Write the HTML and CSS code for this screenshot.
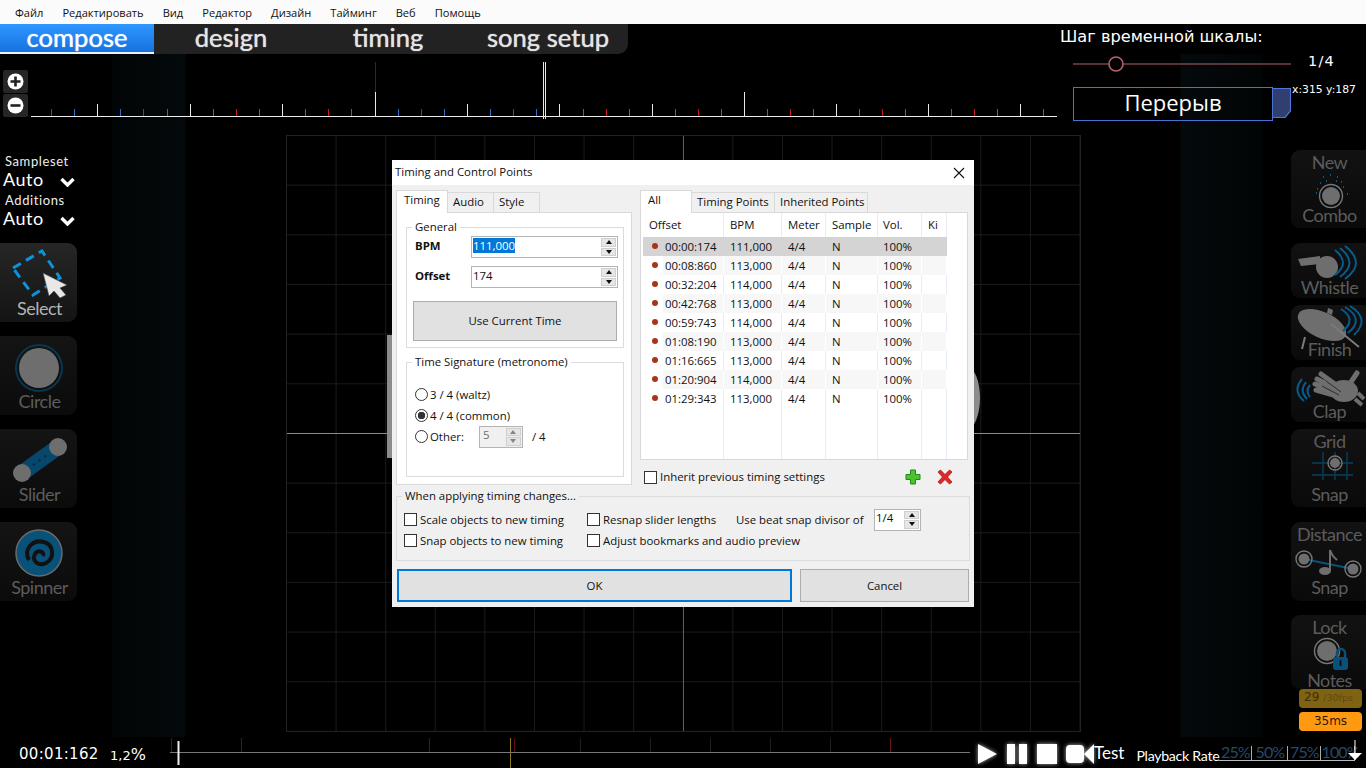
FILE: index.html
```html
<!DOCTYPE html>
<html lang="ru">
<head>
<meta charset="utf-8">
<title>Timing and Control Points</title>
<link rel="stylesheet" href="styles.css">
</head>
<body>
<nav class="menu">
  <span>Файл</span><span>Редактировать</span><span>Вид</span><span>Редактор</span><span>Дизайн</span><span>Тайминг</span><span>Веб</span><span>Помощь</span>
</nav>

<section class="top">
  <div class="top-left">
    <div class="modes">
      <span class="mode mode-on">compose</span><span class="mode m2">design</span><span class="mode m3">timing</span><span class="mode m4">song setup</span>
    </div>
    <div class="ruler">
      <div class="zooms">
        <svg class="zoom-btn" viewBox="0 0 25 23"><rect width="25" height="23" rx="2" fill="#262626"/><circle cx="12.5" cy="11.5" r="8" fill="#fff"/><path d="M7.500 11.500H17.500M12.500 6.500V16.500" stroke="#222" stroke-width="2.600"/></svg>
        <svg class="zoom-btn" viewBox="0 0 25 23"><rect width="25" height="23" rx="2" fill="#262626"/><circle cx="12.500" cy="11.500" r="8" fill="#fff"/><path d="M7.500 11.500H17.500" stroke="#222" stroke-width="2.600"/></svg>
      </div>
      <svg class="ticks" viewBox="31 54 1026 66">
        <path d="M375.500 62V92" stroke="#6a0f14"/>
        <path d="M31 116.500H1057" stroke="#eee"/>
        <path d="M51.500 109V116M143.500 109V116M236.500 109V116M328.500 109V116M421.500 109V116M513.500 109V116M606.500 109V116M698.500 109V116M790.500 109V116M882.500 109V116M974.500 109V116" stroke="#d3141c"/>
        <path d="M74.500 109V116M120.500 109V116M167.500 109V116M213.500 109V116M259.500 109V116M305.500 109V116M351.500 109V116M398.500 109V116M444.500 109V116M490.500 109V116M536.500 109V116M583.500 109V116M629.500 109V116M675.500 109V116M721.500 109V116M767.500 109V116M813.500 109V116M859.500 109V116M905.500 109V116M951.500 109V116M997.500 109V116M1043.500 109V116" stroke="#2f69d6"/>
        <path d="M97.500 104V116M190.500 104V116M282.500 104V116M467.500 104V116M559.500 104V116M652.500 104V116M836.500 104V116M928.500 104V116M1020.500 104V116M375.500 92V116M744.500 92V116M543.500 62V119M545.500 62V119" stroke="#e8e8e8"/>
      </svg>
    </div>
  </div>
  <div class="top-right">
    <div class="snap-title">Шаг временной шкалы:</div>
    <div class="snap-row">
      <svg class="snap-slider" viewBox="0 0 218 16"><path d="M0 8H218" stroke="#b8606f"/><circle cx="43" cy="8" r="7" fill="#000" stroke="#b8606f" stroke-width="1.600"/></svg>
      <span class="snap-val">1/4</span>
    </div>
    <div class="break-row">
      <div class="break-btn">Перерыв</div>
      <svg class="break-tab" viewBox="0 0 18 30"><path d="M0 .5H17.500V23L12 29.500H0" fill="#2e3f70" stroke="#5578d8" stroke-width="1.200"/></svg>
      <span class="coords">x:315 y:187</span>
    </div>
  </div>
</section>

<section class="main">
  <aside class="left">
    <div class="sample">
      <div class="s-label">Sampleset</div>
      <div class="s-value"><span>Auto</span><svg class="chev" viewBox="0 0 16 10"><path d="M2 2L8 8L14 2" fill="none" stroke="#fff" stroke-width="3.400"/></svg></div>
      <div class="s-label s-second">Additions</div>
      <div class="s-value"><span>Auto</span><svg class="chev" viewBox="0 0 16 10"><path d="M2 2L8 8L14 2" fill="none" stroke="#fff" stroke-width="3.400"/></svg></div>
    </div>
    <div class="card card-on">
      <svg class="icon" viewBox="0 0 77 55"><path d="M13 25L42 8L60 35L33 52Z" fill="none" stroke="#0d93dc" stroke-width="3" stroke-dasharray="9 6"/><path d="M43 35L67 47L60 50L66 57L60 60L54 53L49 58Z" transform="translate(0 -5)" fill="#e8e8e8" stroke="#444" stroke-width=".6"/></svg>
      <span class="lbl">Select</span>
    </div>
    <div class="card">
      <svg class="icon" viewBox="0 0 77 55"><circle cx="39" cy="32" r="23" fill="none" stroke="#07364f" stroke-width="2"/><circle cx="39" cy="32" r="20" fill="#6e6e6e"/></svg>
      <span class="lbl">Circle</span>
    </div>
    <div class="card">
      <svg class="icon" viewBox="0 0 77 55"><path d="M22 44L58 18" stroke="#07476b" stroke-width="16"/><path d="M33 36L47 26" stroke="#04283d" stroke-width="2" stroke-dasharray="2 5"/><circle cx="22" cy="44" r="9" fill="#6e6e6e"/><circle cx="58" cy="18" r="9" fill="#6e6e6e"/></svg>
      <span class="lbl">Slider</span>
    </div>
    <div class="card">
      <svg class="icon" viewBox="0 0 77 55"><circle cx="39" cy="31" r="23" fill="#08527a" stroke="#6a6a6a" stroke-width="1.500"/><path d="M29 38C23 27 33 17 44 20C54 23 55 36 46 41C38 45 31 38 35 32C38 27 45 30 43 34" fill="none" stroke="#111" stroke-width="4"/></svg>
      <span class="lbl">Spinner</span>
    </div>
  </aside>

  <aside class="right">
    <div class="rcard h78">
      <span class="lbl">New</span>
      <svg class="ricon i32" viewBox="0 0 75 32"><circle cx="40" cy="23" r="9" fill="#6e6e6e"/><circle cx="40" cy="23" r="11.500" fill="none" stroke="#777" stroke-width="1.400"/><path d="M26 16h1M32 4h1M39 2h1M46 4h1M52 14h1M35 8h1M45 8h1M29 10h1M50 9h1M25 20h1M56 21h1" stroke="#0a5a8a" stroke-width="2"/></svg>
      <span class="lbl">Combo</span>
    </div>
    <div class="rcard h55 gap15">
      <svg class="ricon i32" viewBox="0 0 75 32"><path d="M7 14L29 11V19L10 21Z" fill="#6e6e6e"/><circle cx="36" cy="22" r="11" fill="#6e6e6e"/><path d="M44 5Q60 18 44 30M49 3Q68 18 49 32M54 1Q76 18 54 34" fill="none" stroke="#0a5a8a" stroke-width="2"/></svg>
      <span class="lbl">Whistle</span>
    </div>
    <div class="rcard h55">
      <svg class="ricon i32" viewBox="0 0 75 32"><ellipse cx="31" cy="18" rx="26" ry="13" transform="rotate(25 31 18)" fill="#6e6e6e"/><path d="M37 1L42 3L41 8L36 6Z" fill="#6e6e6e"/><path d="M40 17L68 40M14 30L11 42" stroke="#7a7a7a" stroke-width="2"/><path d="M50 2Q66 12 52 24M54 0Q74 12 57 26M59 -1Q80 12 63 28" fill="none" stroke="#0a5a8a" stroke-width="2"/></svg>
      <span class="lbl">Finish</span>
    </div>
    <div class="rcard h55">
      <svg class="ricon i32" viewBox="0 0 75 32"><ellipse cx="53" cy="22" rx="14" ry="11" fill="#6e6e6e"/><path d="M48 18L30 5M47 21L26 10M46 24L24 15M46 27L25 21M58 16L66 4" fill="none" stroke="#6e6e6e" stroke-width="5" stroke-linecap="round"/><path d="M64 30L71 36M67 24L73 30" stroke="#6e6e6e" stroke-width="4"/><path d="M35 12L50 23M31 17L48 26" stroke="#2c2c2c"/><path d="M11 10Q1 22 13 32M15 13Q8 22 16 30M19 16Q14 22 19 28" fill="none" stroke="#0a5a8a" stroke-width="2"/></svg>
      <span class="lbl">Clap</span>
    </div>
    <div class="rcard h78">
      <span class="lbl">Grid</span>
      <svg class="ricon i32" viewBox="0 0 75 32"><path d="M32 0V28M44 0V28M56 0V28M21 11H62M21 23H62" stroke="#07405e" stroke-width="1.400"/><circle cx="44" cy="11" r="5" fill="#6e6e6e"/><circle cx="44" cy="11" r="7" fill="none" stroke="#777" stroke-width="1.400"/></svg>
      <span class="lbl">Snap</span>
    </div>
    <div class="rcard h79 gap15">
      <span class="lbl">Distance</span>
      <svg class="ricon i32" viewBox="0 0 75 32"><path d="M13 14L62 24" stroke="#08527a" stroke-width="2"/><circle cx="13" cy="14" r="5.500" fill="#6e6e6e"/><circle cx="13" cy="14" r="8" fill="none" stroke="#777" stroke-width="1.400"/><circle cx="62" cy="24" r="5.500" fill="#6e6e6e"/><circle cx="62" cy="24" r="8" fill="none" stroke="#777" stroke-width="1.400"/><ellipse cx="34" cy="26" rx="6" ry="4" fill="#6e6e6e"/><path d="M39 26V5Q41 11 46 15" fill="none" stroke="#6e6e6e" stroke-width="2"/></svg>
      <span class="lbl">Snap</span>
    </div>
    <div class="rcard h74 gap14">
      <span class="lbl">Lock</span>
      <svg class="ricon i32" viewBox="0 0 75 32"><circle cx="36" cy="13" r="10" fill="#6e6e6e"/><circle cx="36" cy="13" r="12.500" fill="none" stroke="#777" stroke-width="1.400"/><path d="M46 20V15A4 4 0 0 1 54 15V20" fill="none" stroke="#08527a" stroke-width="2.400"/><rect x="42" y="19" width="15" height="13" rx="3" fill="#08527a"/><path d="M49.500 22V28" stroke="#111" stroke-width="2"/></svg>
      <span class="lbl">Notes</span>
    </div>
    <div class="fps"><span>29</span><small>/30fps</small></div>
    <div class="ms">35ms</div>
  </aside>
</section>

<footer class="bottom">
  <div class="clock">00:01:162</div>
  <div class="pct">1,2<span>%</span></div>
  <svg class="seek" viewBox="170 734 800 34">
    <path d="M171.500 738V752M241.500 738V752M429.500 738V752M514.500 738V752" stroke="#5c1015"/>
    <path d="M580.500 738V752M650.500 738V752M710.500 738V752M770.500 738V752M830.500 738V752" stroke="#1e1e1e"/>
    <path d="M890.500 738V752" stroke="#6a1418"/>
    <path d="M510.500 738V768" stroke="#8d7a12"/>
    <path d="M170 752.500H970" stroke="#777"/>
    <path d="M178.500 741V765" stroke="#eee" stroke-width="2"/>
  </svg>
  <div class="player">
    <svg class="pbtn" viewBox="0 0 20 20"><path d="M1 0L20 10L1 20Z"/></svg>
    <svg class="pbtn" viewBox="0 0 20 20"><path d="M0 0H8V20H0ZM12 0H20V20H12Z"/></svg>
    <svg class="pbtn" viewBox="0 0 20 20"><path d="M0 0H20V20H0Z"/></svg>
    <svg class="pbtn cam" viewBox="0 0 28 20"><rect y="1" width="18" height="18" rx="4"/><path d="M28 0V20L18 10Z"/></svg>
  </div>
  <span class="test">Test</span>
  <span class="rate-label">Playback Rate</span>
  <div class="rates"><span>25%</span><span>50%</span><span>75%</span><span>100%</span>
    <svg class="rate-arrow" viewBox="0 0 14 28"><path d="M7 0V20" stroke="#fff"/><path d="M0 13H14L7 20Z" fill="#fff"/></svg>
  </div>
</footer>

<div class="field">
  <span class="ghost-l"></span><span class="ghost-r"></span>
</div>

<div class="dialog">
  <div class="d-title"><span>Timing and Control Points</span>
    <svg class="d-close" viewBox="0 0 12 12"><path d="M1 1L11 11M11 1L1 11" stroke="#111" stroke-width="1.100"/></svg>
  </div>
  <div class="panes">
    <div class="pane-l">
      <div class="tabs">
        <span class="tab tab-on t51">Timing</span><span class="tab t46">Audio</span><span class="tab t46">Style</span>
      </div>
      <div class="panel panel-l">
        <fieldset class="fs fs-gen">
          <legend>General</legend>
          <div class="num-row"><b>BPM</b>
            <div class="num"><span class="sel">111,000</span><i class="spin"><u class="up"></u><u class="dn"></u></i></div>
          </div>
          <div class="num-row"><b>Offset</b>
            <div class="num"><span>174</span><i class="spin"><u class="up"></u><u class="dn"></u></i></div>
          </div>
          <button class="btn use">Use Current Time</button>
        </fieldset>
        <fieldset class="fs fs-sig">
          <legend>Time Signature (metronome)</legend>
          <label class="r"><input type="radio" name="sig">3 / 4 (waltz)</label>
          <label class="r"><input type="radio" name="sig" checked>4 / 4 (common)</label>
          <label class="r"><input type="radio" name="sig">Other:
            <span class="num num-off"><span>5</span><i class="spin"><u class="up"></u><u class="dn"></u></i></span>
            <span class="per">/ 4</span></label>
        </fieldset>
      </div>
    </div>
    <div class="pane-r">
      <div class="tabs">
        <span class="tab tab-on t51">All</span><span class="tab t82">Timing Points</span><span class="tab t92">Inherited Points</span>
      </div>
      <div class="panel panel-r">
        <table class="points">
          <colgroup><col class="c1"><col class="c2"><col class="c3"><col class="c4"><col class="c5"><col class="c6"></colgroup>
          <thead><tr><th>Offset</th><th>BPM</th><th>Meter</th><th>Sample</th><th>Vol.</th><th>Ki</th></tr></thead>
          <tbody>
            <tr class="cur"><td class="t">00:00:174</td><td>111,000</td><td>4/4</td><td>N</td><td>100%</td><td></td></tr>
            <tr class="alt"><td class="t">00:08:860</td><td>113,000</td><td>4/4</td><td>N</td><td>100%</td><td></td></tr>
            <tr><td class="t">00:32:204</td><td>114,000</td><td>4/4</td><td>N</td><td>100%</td><td></td></tr>
            <tr class="alt"><td class="t">00:42:768</td><td>113,000</td><td>4/4</td><td>N</td><td>100%</td><td></td></tr>
            <tr><td class="t">00:59:743</td><td>114,000</td><td>4/4</td><td>N</td><td>100%</td><td></td></tr>
            <tr class="alt"><td class="t">01:08:190</td><td>113,000</td><td>4/4</td><td>N</td><td>100%</td><td></td></tr>
            <tr><td class="t">01:16:665</td><td>113,000</td><td>4/4</td><td>N</td><td>100%</td><td></td></tr>
            <tr class="alt"><td class="t">01:20:904</td><td>114,000</td><td>4/4</td><td>N</td><td>100%</td><td></td></tr>
            <tr><td class="t">01:29:343</td><td>113,000</td><td>4/4</td><td>N</td><td>100%</td><td></td></tr>
            <tr class="fill"><td></td><td></td><td></td><td></td><td></td><td></td></tr>
          </tbody>
        </table>
      </div>
      <div class="inherit">
        <label class="c"><input type="checkbox">Inherit previous timing settings</label>
        <svg class="act act-add" viewBox="0 0 16 16"><path d="M5.500 1H10.500V5.500H15V10.500H10.500V15H5.500V10.500H1V5.500H5.500Z" fill="#4cc32e" stroke="#1f8a14"/></svg>
        <svg class="act" viewBox="0 0 16 16"><path d="M1 3L3.500 1L8 5.500L12.500 1L15 3L10.500 8L15 13L12.500 15L8 10.500L3.500 15L1 13L5.500 8Z" fill="#e0262a" stroke="#a81a1a" stroke-width=".8"/></svg>
      </div>
    </div>
  </div>
  <fieldset class="fs fs-apply">
    <legend>When applying timing changes...</legend>
    <div class="apply-grid">
      <label class="c"><input type="checkbox">Scale objects to new timing</label>
      <label class="c"><input type="checkbox">Resnap slider lengths</label>
      <span class="divisor">Use beat snap divisor of</span>
      <div class="num num-div"><span>1/4</span><i class="spin"><u class="up"></u><u class="dn"></u></i></div>
      <label class="c"><input type="checkbox">Snap objects to new timing</label>
      <label class="c span3"><input type="checkbox">Adjust bookmarks and audio preview</label>
    </div>
  </fieldset>
  <div class="d-actions">
    <button class="btn ok">OK</button>
    <button class="btn cancel">Cancel</button>
  </div>
</div>
</body>
</html>
```

FILE: styles.css
```css
* { box-sizing: border-box; }
html, body { margin: 0; height: 100%; }
body {
  position: relative;
  width: 1366px;
  height: 768px;
  overflow: hidden;
  color: #fff;
  font-family: "Open Sans", "Liberation Sans", sans-serif;
  background-color: #000;
  background-image: linear-gradient(to right,
    #000 112px, #020506 112px, #04090b 185px, #000 186px,
    #000 1180px, #04090b 1181px, #020506 1262px, #000 1263px);
  background-repeat: no-repeat;
  background-position: 0 54px;
  background-size: 100% 683px;
}

/* menu */
.menu {
  height: 24px;
  background: #fbfbfb;
  color: #111;
  display: flex;
  align-items: center;
  padding-left: 15px;
  gap: 19px;
  font-size: 11.1px;
}

/* top */
.top { display: flex; height: 102px; }
.top-left { width: 1060px; }
.modes {
  width: 628px;
  height: 30px;
  background: #222;
  border-radius: 0 0 10px 0;
  display: flex;
  font-family: Lato, "Open Sans", sans-serif;
  font-size: 25.6px;
  line-height: 27px;
  color: #e4e4e4;
  text-shadow: 0 0 1px currentColor;
}
.mode { display: block; text-align: center; }
.mode-on {
  width: 154px;
  height: 30px;
  color: #fff;
  background: linear-gradient(#2f97ff, #1672e0);
  border-bottom: 2px solid #e8f2ff;
}
.m2 { width: 154px; }
.m3 { width: 160px; }
.m4 { width: 160px; }
.ruler { display: flex; height: 66px; }
.zooms { width: 31px; padding: 16px 0 0 3px; display: flex; flex-direction: column; gap: 1px; }
.zoom-btn { display: block; width: 25px; height: 23px; }
.ticks { display: block; width: 1026px; height: 66px; }

.top-right { width: 306px; }
.snap-title { font-family: "DejaVu Sans", sans-serif; font-size: 16.2px; line-height: 25px; }
.snap-row { display: flex; align-items: center; padding-left: 13px; height: 30px; }
.snap-slider { display: block; width: 218px; height: 16px; margin-top: -1px; }
.snap-val { margin-left: 17px; font-family: "DejaVu Sans", sans-serif; font-size: 14.5px; letter-spacing: 1.2px; margin-top: -7px; }
.break-row { display: flex; padding-left: 13px; margin-top: 8px; height: 33px; }
.break-btn {
  width: 200px;
  height: 34px;
  border: 1px solid #4a72d0;
  text-align: center;
  font-size: 22px;
  line-height: 29px;
}
.break-tab { display: block; width: 18px; height: 30px; margin-top: 1px; }
.coords { font-family: "DejaVu Sans", sans-serif; font-size: 10.8px; line-height: 13px; margin: -4px 0 0 1px; }

/* main */
.main { display: flex; justify-content: space-between; height: 608px; }
.left { width: 78px; display: flex; flex-direction: column; gap: 14px; }
.sample { height: 103px; padding-top: 28px; font-family: Lato, sans-serif; }
.s-label { padding-left: 5px; font-size: 13px; line-height: 15px; letter-spacing: .6px; color: #eee; }
.s-second { margin-top: 3px; margin-bottom: -1px; }
.s-value { display: flex; justify-content: space-between; align-items: center; width: 77px; padding: 0 1px 0 3px; height: 22px; margin-top: -1px; font-size: 18px; letter-spacing: .5px; }
.chev { width: 17px; height: 10px; margin-top: 6px; }
.card {
  height: 79px;
  width: 77px;
  border-radius: 0 9px 9px 0;
  background: linear-gradient(#141414, #0b0b0b);
  display: flex;
  flex-direction: column;
  align-items: center;
}
.card-on { background: linear-gradient(#262626, #141414); }
.card-on .lbl { color: #b4b4b4; }
.icon { display: block; width: 77px; height: 55px; flex: none; overflow: visible; }
.lbl { font-family: Lato, sans-serif; font-size: 18px; line-height: 21px; letter-spacing: -.5px; padding-left: 2px; color: #5c5c5c; }

.right { width: 75px; padding-top: 24px; display: flex; flex-direction: column; gap: 7px; }
.rcard {
  width: 75px;
  border-radius: 9px 0 0 9px;
  background: linear-gradient(#121212, #0a0a0a);
  display: flex;
  flex-direction: column;
  align-items: center;
  flex: none;
  padding-top: 2px;
}
.h78 { height: 78px; }
.h79 { height: 79px; }
.h74 { height: 74px; }
.h55 { height: 55px; padding-top: 0; }
.gap15 { margin-top: 8px; }
.gap14 { margin-top: 7px; }
.ricon { display: block; width: 75px; flex: none; overflow: visible; }
.i32 { height: 32px; }
.h55 .ricon { margin-top: 2px; }
.fps, .ms {
  width: 63px;
  height: 19px;
  margin-left: 8px;
  border-radius: 4px;
  font-family: "DejaVu Sans", sans-serif;
  flex: none;
}
.fps {
  margin-top: -7px;
  background: #7f6212;
  color: #3d2f08;
  font-size: 12px;
  line-height: 17px;
  padding-left: 5px;
}
.fps small { font-size: 9.5px; margin-left: 4px; color: #5e4a10; }
.ms {
  margin-top: -3px;
  background: #ff9911;
  color: #2a1a00;
  font-size: 12px;
  line-height: 19px;
  text-align: center;
}

/* bottom */
.bottom { display: flex; height: 34px; position: relative; }
.clock { margin-left: 19px; width: 91px; font-family: "DejaVu Sans", sans-serif; font-size: 15px; line-height: 40px; letter-spacing: .3px; }
.pct { width: 60px; font-family: "DejaVu Sans", sans-serif; font-size: 13px; line-height: 42px; }
.pct span { font-size: 16px; }
.seek { display: block; width: 800px; height: 34px; flex: none; }
.player { display: flex; align-items: flex-start; margin-left: 7px; padding-top: 10px; gap: 10px; }
.pbtn { display: block; width: 20px; height: 20px; fill: #fff; filter: drop-shadow(0 0 2px rgba(255,255,255,.7)); }
.cam { width: 28px; margin-left: -1px; }
.test { font-family: Lato, sans-serif; font-size: 17px; line-height: 37px; }
.rate-label { width: 83px; font-family: Lato, sans-serif; font-size: 14.2px; line-height: 43px; margin-left: 12px; letter-spacing: -.3px; white-space: nowrap; flex: none; }
.rates {
  position: relative;
  display: grid;
  grid-template-columns: 33px 36px 33px 34px;
  width: 136px;
  height: 18px;
  margin-top: 9px;
  border-bottom: 1px solid #bbb;
  font-family: Lato, sans-serif;
  font-size: 16px;
  color: #27486a;
  flex: none;
}
.rates span { border-right: 1px solid #aaa; height: 14px; margin-top: 3px; line-height: 12px; text-align: center; letter-spacing: -.8px; white-space: nowrap; }
.rate-arrow { position: absolute; right: -7px; top: -3px; width: 14px; height: 28px; }

/* playfield behind the dialog */
.field {
  position: absolute;
  left: 286px;
  top: 135px;
  width: 795px;
  height: 597px;
  z-index: -1;
  border: 1px solid #222;
  background-origin: border-box;
  background-clip: border-box;
  background-image:
    linear-gradient(to right, transparent 397px, #5c5c5c 397px, #5c5c5c 398px, transparent 398px),
    linear-gradient(to bottom, transparent 298px, #8a8a8a 298px, #8a8a8a 299px, transparent 299px),
    linear-gradient(to right, #1b1b1b 1px, transparent 1px),
    linear-gradient(to bottom, #1b1b1b 1px, transparent 1px);
  background-size: 100% 100%, 100% 100%, 49.6px 100%, 100% 49.67px;
}
.ghost-l, .ghost-r { position: absolute; background: #8c8c8c; }
.ghost-l { left: 100px; top: 199px; width: 6px; height: 123px; }
.ghost-r { left: 680px; top: 231px; width: 13px; height: 62px; border-radius: 0 100% 100% 0 / 0 50% 50% 0; }

/* dialog */
.dialog {
  position: absolute;
  left: 392px;
  top: 160px;
  width: 582px;
  height: 447px;
  background: #f0f0f0;
  color: #111;
  font-size: 11.4px;
  line-height: 16px;
}
.d-title {
  height: 25px;
  background: #fff;
  display: flex;
  justify-content: space-between;
  align-items: center;
  padding: 0 9px 2px 3px;
}
.d-close { width: 12px; height: 12px; margin-top: 2px; }
.panes { display: flex; gap: 8px; padding: 5px 0 0 4px; }
.pane-l { width: 236px; }
.pane-r { width: 328px; }
.tabs { display: flex; align-items: flex-end; height: 23px; padding-left: 1px; position: relative; z-index: 1; margin-bottom: -1px; }
.tab {
  height: 21px;
  border: 1px solid #d9d9d9;
  border-left-width: 0;
  background: #f0f0f0;
  padding-left: 5px;
  line-height: 17px;
}
.tab-on {
  height: 23px;
  margin-left: -1px;
  border-left-width: 1px;
  background: #fff;
  border-bottom: 0;
  padding-left: 7px;
}
.t51 { width: 52px; }
.t46 { width: 46px; }
.t82 { width: 83px; }
.t92 { width: 93px; }
.panel { background: #fff; border: 1px solid #d9d9d9; }
.panel-l { height: 273px; padding: 6px 0 0 9px; }
.panel-r { height: 248px; padding-left: 2px; }

.fs {
  margin: 0;
  padding: 0;
  border: 1px solid #dcdcdc;
  min-width: 0;
}
.fs legend { padding: 0 3px; margin-left: -3px; font-size: 11.4px; line-height: 16px; }
.fs-gen { width: 218px; height: 129px; padding: 1px 0 0 8px; }
.num-row { display: flex; align-items: center; height: 22px; margin-bottom: 8px; }
.num-row b { width: 56px; font-weight: 700; padding-bottom: 3px; }
.num {
  position: relative;
  display: flex;
  align-items: center;
  width: 147px;
  height: 22px;
  border: 1px solid #b4b4b4;
  background: #fff;
  padding: 0 0 3px 1px;
}
.sel { background: #0078d7; color: #fff; line-height: 15px; }
.spin { position: absolute; right: 1px; top: 1px; width: 15px; height: 18px; display: flex; flex-direction: column; gap: 1px; }
.spin u { display: flex; justify-content: center; align-items: center; height: 9px; background: #e6e6e6; border: 1px solid #cfcfcf; }
.spin u::before { content: ""; border-left: 3px solid transparent; border-right: 3px solid transparent; }
.up::before { border-bottom: 4px solid #111; }
.dn::before { border-top: 4px solid #111; }
.btn {
  display: block;
  font: inherit;
  color: #111;
  background: #e1e1e1;
  border: 1px solid #adadad;
  padding: 0;
}
.use { width: 204px; height: 40px; margin: 13px 0 0 -2px; }
.fs-sig { width: 218px; height: 123px; margin-top: 6px; padding: 14px 0 0 8px; }
.r { display: flex; align-items: center; height: 21px; }
.r input {
  appearance: none;
  width: 13px;
  height: 13px;
  margin: 0 2px 0 0;
  border: 1px solid #333;
  border-radius: 50%;
  background: #fff;
  flex: none;
}
.r input:checked { background: radial-gradient(circle, #333 3.5px, #fff 4px); }
.num-off { width: 44px; margin-left: 15px; background: #f0f0f0; color: #6d6d6d; padding-left: 3px; flex: none; }
.num-off .spin u::before { opacity: .45; }
.per { margin-left: 9px; }

.points { width: 304px; height: 246px; border-collapse: separate; border-spacing: 0; table-layout: fixed; }
.c1 { width: 81px; } .c2 { width: 58px; } .c3 { width: 44px; } .c4 { width: 52px; } .c5 { width: 44px; } .c6 { width: 25px; }
.points th, .points td {
  padding: 0 0 0 6px;
  border-right: 1px solid #e6edf6;
  font-weight: 400;
  text-align: left;
  white-space: nowrap;
}
.points th { height: 24px; }
.points td { height: 19px; }
.points th:nth-child(5), .points td:nth-child(5) { padding-left: 5px; }
.points td.t { padding-left: 22px; position: relative; }
.points td.t::before {
  content: "";
  position: absolute;
  left: 9px;
  top: 6px;
  width: 6px;
  height: 6px;
  border-radius: 50%;
  background: #a8341a;
}
.cur td { background: #d4d4d4; border-right-color: #d4d4d4; }
.alt td { background: #f7f7f7; border-right-color: #fff; }
.alt td.t { background: linear-gradient(to right, #fff 20px, #f7f7f7 20px); }
.fill td { height: auto; }

.inherit { display: flex; align-items: center; height: 25px; padding: 9px 15px 0 4px; }
.c { display: flex; align-items: center; }
.c input {
  appearance: none;
  width: 13px;
  height: 13px;
  margin: 0 3px 0 0;
  border: 1px solid #333;
  background: #fff;
  flex: none;
}
.act { display: block; width: 16px; height: 16px; margin-left: 16px; flex: none; }
.act-add { margin-left: auto; }

.fs-apply { width: 574px; height: 73px; margin: 3px 0 0 4px; padding: 5px 0 0 7px; }
.fs-apply legend { margin-left: -2px; }
.apply-grid { display: grid; grid-template-columns: 183px 149px 138px 47px; grid-auto-rows: 21px; align-items: center; }
.span3 { grid-column: span 3; }
.num-div { width: 47px; }
.d-actions { display: flex; gap: 8px; padding: 8px 0 0 5px; }
.ok { width: 395px; height: 33px; border: 2px solid #0078d7; }
.cancel { width: 169px; height: 33px; }
```
